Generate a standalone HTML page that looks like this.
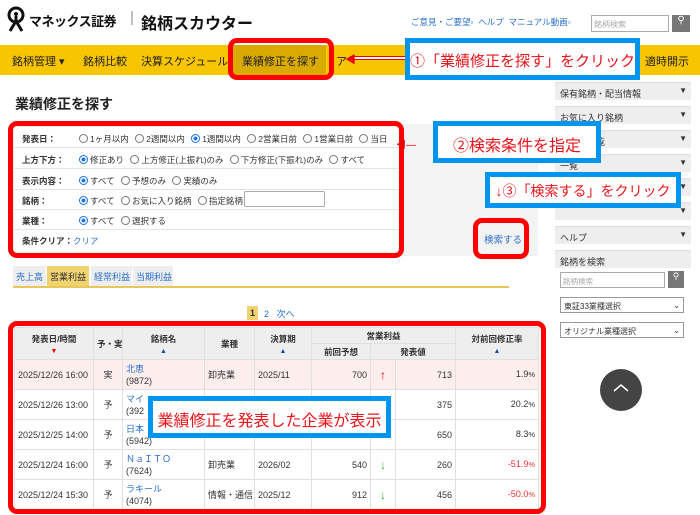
<!DOCTYPE html>
<html><head><meta charset="utf-8"><style>
*{margin:0;padding:0;box-sizing:border-box}
body{width:700px;height:515px;overflow:hidden;background:#fff;font-family:"Liberation Sans","Noto Sans CJK JP",sans-serif;font-size:9px;color:#333;position:relative}
.a{position:absolute;white-space:nowrap}
.lnk{color:#2a6fc9}
.nav{position:absolute;left:0;top:45px;width:700px;height:30px;background:#f7c600}
.nav span{position:absolute;top:8px;font-size:11px;color:#222;white-space:nowrap}
.side{position:absolute;left:555px;width:136px;height:18px;background:#eee;border-top:1px solid #ddd;font-size:9px;padding:4px 0 0 5px;color:#333;white-space:nowrap}
.side b{position:absolute;right:4px;top:3px;font-size:8px}
.blue{position:absolute;background:#fff;border:5px solid #0096f0;color:#e8141a;text-align:center;font-size:15px;white-space:nowrap}
.red{position:absolute;border:5px solid #f00;border-radius:9px}
.row{position:absolute;left:14px;width:385px;border-bottom:1px solid #e4e4e4;height:20px}
.row .l{position:absolute;left:8px;top:5px;font-weight:bold;font-size:8.5px;white-space:nowrap}
.row .o{position:absolute;left:61px;top:5px;font-size:8.5px;white-space:nowrap}
.rb{display:inline-block;width:9px;height:9px;border:1px solid #777;border-radius:50%;vertical-align:-1px;margin:0 2px 0 4px;background:#fff}
.rb.on{border-color:#1a73e8;background:radial-gradient(#1a73e8 35%,#fff 45%)}
table{position:absolute;left:14px;top:327px;border-collapse:collapse;font-size:9px;table-layout:fixed;width:524px}
td,th{border:1px solid #e0e0e0;padding:0 3px;white-space:nowrap;overflow:hidden}
th{background:#eee;font-size:8.5px;font-weight:bold;height:16px}
td{height:30px;line-height:12px}
.r{text-align:right}.c{text-align:center}
.tri{color:#1a4fb0;font-size:7px}
</style></head><body>
<!-- header -->
<svg class="a" style="left:5px;top:6px" width="22" height="26" viewBox="0 0 22 26"><circle cx="11" cy="9" r="7" fill="none" stroke="#111" stroke-width="3"/><circle cx="11" cy="8" r="2" fill="#111"/><path d="M11 10 L11 17 M5 25 L11 15 L17 25" stroke="#111" stroke-width="3" fill="none"/></svg>
<div class="a" style="left:29px;top:11px;font-size:13px;font-weight:bold;color:#111;letter-spacing:-0.5px">マネックス証券</div>
<div class="a" style="left:130px;top:9px;font-size:15px;color:#999">|</div>
<div class="a" style="left:141px;top:10px;font-size:16px;font-weight:bold;color:#111">銘柄スカウター</div>
<div class="a lnk" style="left:411px;top:16px;font-size:8.5px">ご意見・ご要望▫ &nbsp;ヘルプ &nbsp;マニュアル動画▫</div>
<div class="a" style="left:591px;top:15px;width:78px;height:17px;border:1px solid #aaa;font-size:8px;color:#aaa;padding:3px 2px">銘柄検索</div>
<div class="a" style="left:672px;top:15px;width:18px;height:17px;background:#777;color:#fff;font-size:10px;text-align:center">⚲</div>
<!-- nav -->
<div class="nav">
<span style="left:12px">銘柄管理 ▾</span><span style="left:83px">銘柄比較</span><span style="left:141px">決算スケジュール</span>
<span style="left:233px;top:0;height:30px;width:93px;background:#d9aa00;padding:8px 0 0 9px">業績修正を探す</span>
<span style="left:336px">ア</span><span style="left:645px">適時開示</span>
</div>
<div class="red" style="left:228px;top:38px;width:106px;height:42px"></div>
<div class="a" style="left:350px;top:56px;width:55px;height:4px;border-top:1px solid #e00;border-bottom:1px solid #e00;background:#fff"></div>
<div class="a" style="left:345px;top:51px;color:#e00;font-size:11px">◀</div>
<div class="blue" style="left:405px;top:38px;width:235px;height:42px;padding-top:7px">①「業績修正を探す」をクリック</div>
<!-- title -->
<div class="a" style="left:15px;top:94px;font-size:14px;font-weight:bold;color:#222">業績修正を探す</div>
<!-- sidebar -->
<div class="side" style="top:82px">保有銘柄・配当情報<b>▼</b></div>
<div class="side" style="top:106px">お気に入り銘柄<b>▼</b></div>
<div class="side" style="top:130px">の銘柄一覧<b>▼</b></div>
<div class="side" style="top:154px">一覧<b>▼</b></div>
<div class="side" style="top:178px"><b>▼</b></div>
<div class="side" style="top:202px"><b>▼</b></div>
<div class="side" style="top:226px">ヘルプ<b>▼</b></div>
<div class="side" style="top:250px">銘柄を検索</div>
<div class="a" style="left:560px;top:272px;width:105px;height:16px;border:1px solid #aaa;font-size:7.5px;color:#aaa;padding:3px 2px">銘柄検索</div>
<div class="a" style="left:668px;top:271px;width:16px;height:17px;background:#777;color:#fff;font-size:9px;text-align:center">⚲</div>
<div class="a" style="left:560px;top:297px;width:124px;height:16px;border:1px solid #999;font-size:8px;padding:3px 3px">東証33業種選択<span style="float:right">⌄</span></div>
<div class="a" style="left:560px;top:322px;width:124px;height:16px;border:1px solid #999;font-size:8px;padding:3px 3px">オリジナル業種選択<span style="float:right">⌄</span></div>
<div class="a" style="left:600px;top:369px;width:42px;height:42px;border-radius:50%;background:#444"></div>
<svg class="a" style="left:612px;top:382px" width="18" height="12"><path d="M2 9 L9 3 L16 9" stroke="#fff" stroke-width="1.5" fill="none"/></svg>
<!-- form -->
<div class="a" style="left:10px;top:124px;width:528px;height:132px;background:#f3f3f3"></div>
<div class="a" style="left:14px;top:127px;width:390px;height:124px;background:#fff"></div>
<div class="row" style="top:128px"><span class="l">発表日：</span><span class="o"><i class="rb"></i>1ヶ月以内 <i class="rb"></i>2週間以内 <i class="rb on"></i>1週間以内 <i class="rb"></i>2営業日前 <i class="rb"></i>1営業日前 <i class="rb"></i>当日</span></div>
<div class="row" style="top:149px"><span class="l">上方下方：</span><span class="o"><i class="rb on"></i>修正あり <i class="rb"></i>上方修正(上振れ)のみ <i class="rb"></i>下方修正(下振れ)のみ <i class="rb"></i>すべて</span></div>
<div class="row" style="top:170px"><span class="l">表示内容：</span><span class="o"><i class="rb on"></i>すべて <i class="rb"></i>予想のみ <i class="rb"></i>実績のみ</span></div>
<div class="row" style="top:190px"><span class="l">銘柄：</span><span class="o"><i class="rb on"></i>すべて <i class="rb"></i>お気に入り銘柄 <i class="rb"></i>指定銘柄</span></div>
<div class="a" style="left:244px;top:191px;width:81px;height:16px;border:1px solid #aaa;border-radius:2px;background:#fff"></div>
<div class="row" style="top:210px"><span class="l">業種：</span><span class="o"><i class="rb on"></i>すべて <i class="rb"></i>選択する</span></div>
<div class="row" style="top:230px;border:none"><span class="l">条件クリア：<span class="lnk" style="font-weight:normal">クリア</span></span></div>
<div class="red" style="left:8px;top:121px;width:396px;height:137px"></div>
<div class="a" style="left:396px;top:136px;color:#e00;font-size:10px">◀—</div>
<div class="blue" style="left:433px;top:121px;width:168px;height:42px;padding-top:6px;font-size:16px">②検索条件を指定</div>
<div class="blue" style="left:485px;top:172px;width:196px;height:36px;padding-top:4px;font-size:14px">↓③「検索する」をクリック</div>
<div class="a lnk" style="left:484px;top:232px;font-size:9.5px">検索する</div>
<div class="red" style="left:473px;top:218px;width:56px;height:41px"></div>
<!-- tabs -->
<div class="a lnk" style="left:13px;top:266px;width:33px;height:20px;background:#eee;padding:4px 3px;font-size:9px">売上高</div>
<div class="a" style="left:47px;top:266px;width:42px;height:20px;background:#f0d370;padding:4px 3px;font-size:9px">営業利益</div>
<div class="a lnk" style="left:91px;top:266px;width:41px;height:20px;background:#eee;padding:4px 3px;font-size:9px">経常利益</div>
<div class="a lnk" style="left:133px;top:266px;width:40px;height:20px;background:#eee;padding:4px 3px;font-size:9px">当期利益</div>
<div class="a" style="left:13px;top:286px;width:496px;height:2px;background:#e8c75a"></div>
<!-- pager -->
<div class="a" style="left:247px;top:306px;width:11px;height:14px;background:#f0d370;font-weight:bold;text-align:center;padding-top:2px">1</div>
<div class="a lnk" style="left:255px;top:307px;padding-left:9px">2 &nbsp;&nbsp;次へ</div>
<!-- table -->
<table>
<colgroup><col style="width:79px"><col style="width:29px"><col style="width:82px"><col style="width:50px"><col style="width:57px"><col style="width:59px"><col style="width:25px"><col style="width:60px"><col style="width:83px"></colgroup>
<tr><th rowspan="2" style="height:31px">発表日/時間<br><span style="color:#e00;font-size:7px">▼</span></th><th rowspan="2">予・実</th><th rowspan="2">銘柄名<br><span class="tri">▲</span></th><th rowspan="2">業種</th><th rowspan="2">決算期<br><span class="tri">▲</span></th><th colspan="3">営業利益</th><th rowspan="2">対前回修正率<br><span class="tri">▲</span></th></tr>
<tr><th>前回予想</th><th colspan="2">発表値</th></tr>
<tr style="background:#fdeeee"><td>2025/12/26 16:00</td><td class="c">実</td><td><span class="lnk">北恵</span><br>(9872)</td><td>卸売業</td><td>2025/11</td><td class="r">700</td><td class="c" style="color:#e00;font-size:12px">↑</td><td class="r">713</td><td class="r">1.9<small>%</small></td></tr>
<tr><td>2025/12/26 13:00</td><td class="c">予</td><td><span class="lnk">マイ</span><br>(392</td><td></td><td></td><td></td><td></td><td class="r">375</td><td class="r">20.2<small>%</small></td></tr>
<tr><td>2025/12/25 14:00</td><td class="c">予</td><td><span class="lnk">日本</span><br>(5942)</td><td></td><td></td><td></td><td></td><td class="r">650</td><td class="r">8.3<small>%</small></td></tr>
<tr><td>2025/12/24 16:00</td><td class="c">予</td><td><span class="lnk">ＮａＩＴＯ</span><br>(7624)</td><td>卸売業</td><td>2026/02</td><td class="r">540</td><td class="c" style="color:#3a3;font-size:12px">↓</td><td class="r">260</td><td class="r" style="color:#e33">-51.9<small>%</small></td></tr>
<tr><td>2025/12/24 15:30</td><td class="c">予</td><td><span class="lnk">ラキール</span><br>(4074)</td><td>情報・通信</td><td>2025/12</td><td class="r">912</td><td class="c" style="color:#3a3;font-size:12px">↓</td><td class="r">456</td><td class="r" style="color:#e33">-50.0<small>%</small></td></tr>
</table>
<div class="red" style="left:8px;top:321px;width:538px;height:193px"></div>
<div class="blue" style="left:148px;top:396px;width:243px;height:42px;padding-top:6px;font-size:16px">業績修正を発表した企業が表示</div>
</body></html>
